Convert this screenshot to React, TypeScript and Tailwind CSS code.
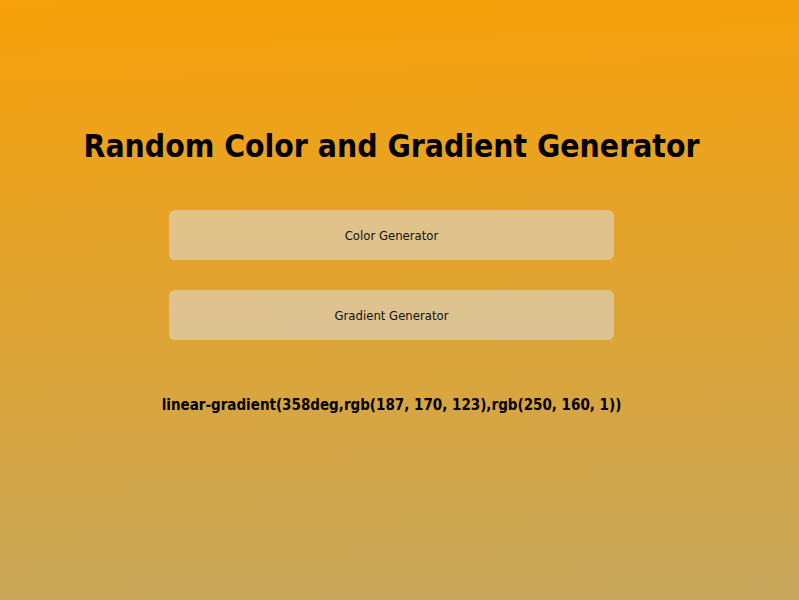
import { useState } from 'react'

const gradient = 'linear-gradient(358deg,rgb(187, 170, 123),rgb(250, 160, 1))'

export default function App() {
  const [mode, setMode] = useState<'color' | 'gradient'>('gradient')

  return (
    <div className="min-h-screen w-full bg-[linear-gradient(358deg,rgb(199,167,92),rgb(248,161,8))] font-['DejaVu_Sans_Condensed','DejaVu_Sans',sans-serif] text-black">
      <div className="flex flex-col items-center pr-4 pt-[126px]">
        <h1 className="text-[31.6px] font-bold leading-[40px]">Random Color and Gradient Generator</h1>

        <div className="mt-[44px] flex w-[445px] flex-col gap-[30px]">
          <button
            onClick={() => setMode('color')}
            className="h-[50px] w-full rounded-[6px] bg-[rgba(220,220,220,0.55)] pt-[2px] text-[13px] text-[#111]"
          >
            Color Generator
          </button>
          <button
            onClick={() => setMode('gradient')}
            className="h-[50px] w-full rounded-[6px] bg-[rgba(220,220,220,0.55)] pt-[2px] text-[13px] text-[#111]"
          >
            Gradient Generator
          </button>
        </div>

        <p className="mt-[55px] text-[15px] font-bold leading-[20px]">
          {mode === 'gradient' ? gradient : 'rgb(250, 160, 1)'}
        </p>
      </div>
    </div>
  )
}
